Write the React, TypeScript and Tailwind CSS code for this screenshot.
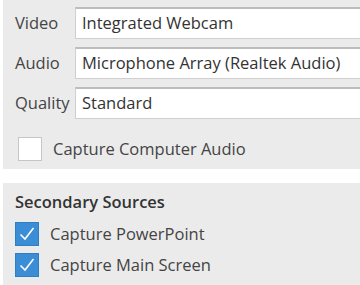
import React from "react";

const font = { fontFamily: '"Open Sans", "Noto Sans", sans-serif' };

function Row({ label, value }: { label: string; value: string }) {
  return (
    <div className="flex items-center h-[32px]">
      <div className="w-[72px] pl-[12px] text-[16.5px] text-[#444] whitespace-nowrap">{label}</div>
      <div className="flex-1 h-[32px] bg-white border border-[#cfcfcf] border-t-[#bdbdbd] border-t-2 flex items-center pl-[6px] text-[16.5px] text-[#333] whitespace-nowrap">
        {value}
      </div>
    </div>
  );
}

function Check({ checked, label }: { checked?: boolean; label: string }) {
  return (
    <div className="flex items-center gap-[11px]">
      {checked ? (
        <div className="w-[24px] h-[24px] bg-[#3b8ed6] border border-[#2f7fc4] flex items-center justify-center">
          <svg width="18" height="18" viewBox="0 0 18 18" fill="none">
            <path d="M2.5 9.5 L7 14 L15.5 3" stroke="white" strokeWidth="1.6" />
          </svg>
        </div>
      ) : (
        <div className="w-[24px] h-[24px] bg-white border border-[#c6c6c6]" />
      )}
      <span className="text-[16.5px] text-[#444]">{label}</span>
    </div>
  );
}

export default function App() {
  return (
    <div className="w-[360px] h-[285px] overflow-hidden bg-white pl-[3px]" style={font}>
      <div className="w-[370px] h-[169px] bg-[#ebebeb] pt-[7px] flex flex-col">
        <div className="flex flex-col gap-[8px]">
          <Row label="Video" value="Integrated Webcam" />
          <Row label="Audio" value="Microphone Array (Realtek Audio)" />
          <Row label="Quality" value="Standard" />
        </div>
        <div className="mt-[18px] pl-[15px]">
          <Check label="Capture Computer Audio" />
        </div>
      </div>
      <div className="w-[370px] mt-[14px] h-[102px] bg-[#ebebeb] pl-[12px] pt-[9px] flex flex-col">
        <div className="text-[16.5px] font-semibold text-[#333] h-[20px] leading-[20px]">Secondary Sources</div>
        <div className="mt-[10px] flex flex-col gap-[6px]">
          <Check checked label="Capture PowerPoint" />
          <Check checked label="Capture Main Screen" />
        </div>
        <div className="mt-[7px] h-[2px] bg-[#3b8ed6]" />
      </div>
    </div>
  );
}
